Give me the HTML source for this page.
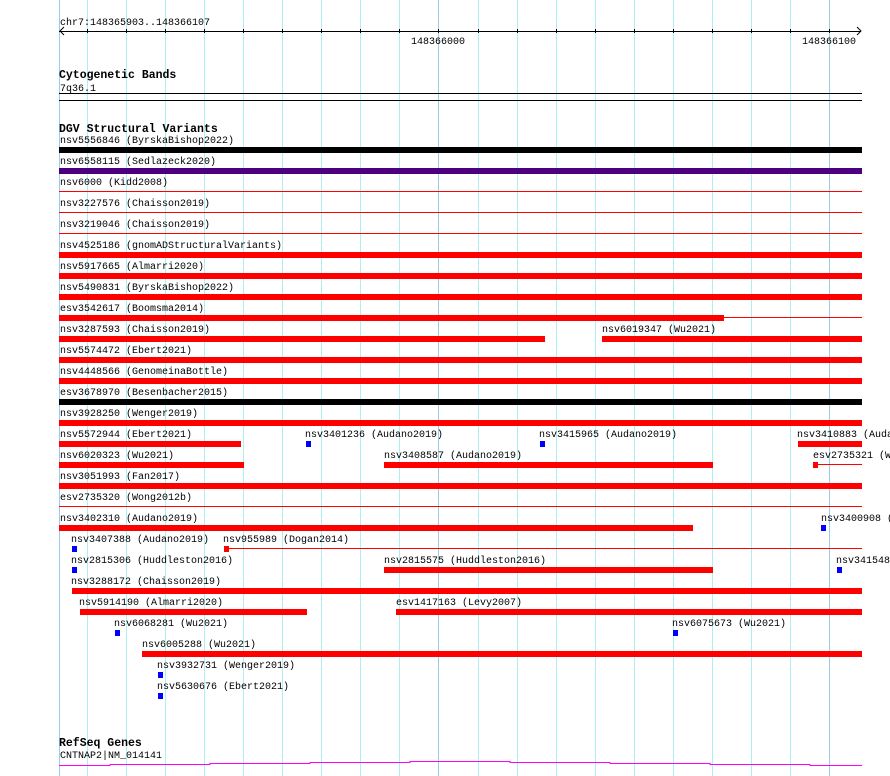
<!DOCTYPE html>
<html><head><meta charset="utf-8"><style>
html,body{overflow:hidden}
body{margin:0;width:890px;height:776px;background:#fff;position:relative;font-family:"Liberation Mono",monospace}
.g{position:absolute;top:0;height:776px;width:1px;background:#aef0f0}
.gd{background:#98cce8}
.t{position:absolute;font-size:10px;line-height:10px;white-space:nowrap;color:#000;transform:translateY(3px)}
.b{position:absolute;font-size:11.5px;font-weight:bold;line-height:12px;white-space:nowrap;transform:translateY(2px)}
.r{position:absolute;height:6px;background:#f00}
.l{position:absolute;height:1px;background:#f00}
.s{position:absolute;width:5px;height:6px;background:#00f}
.k{position:absolute;height:1px;background:#000}
</style></head><body>
<div class="g gd" style="left:59px"></div>
<div class="g" style="left:87px"></div><div class="g" style="left:126px"></div><div class="g" style="left:165px"></div><div class="g" style="left:204px"></div><div class="g" style="left:243px"></div><div class="g" style="left:282px"></div><div class="g" style="left:321px"></div><div class="g" style="left:360px"></div><div class="g" style="left:399px"></div>
<div class="g gd" style="left:438px"></div>
<div class="g" style="left:478px"></div><div class="g" style="left:517px"></div><div class="g" style="left:556px"></div><div class="g" style="left:595px"></div><div class="g" style="left:634px"></div><div class="g" style="left:673px"></div><div class="g" style="left:712px"></div><div class="g" style="left:751px"></div><div class="g" style="left:790px"></div>
<div class="g gd" style="left:829px"></div>

<div class="t" style="left:60px;top:16px">chr7:148365903..148366107</div>
<div class="k" style="left:59px;top:31px;width:802px"></div>
<svg style="position:absolute;left:0;top:0" width="890" height="50">
<path d="M64 27 L60 31 L64 35 M857 27 L861 31 L857 35" stroke="#000" fill="none"/>
<g stroke="#000"><path d="M87.5 29v4M126.5 29v4M165.5 29v4M204.5 29v4M243.5 29v4M282.5 29v4M321.5 29v4M360.5 29v4M399.5 29v4M438.5 29v4M478.5 29v4M517.5 29v4M556.5 29v4M595.5 29v4M634.5 29v4M673.5 29v4M712.5 29v4M751.5 29v4M790.5 29v4M829.5 29v4"/></g>
</svg>
<div class="t" style="left:411px;top:35px">148366000</div>
<div class="t" style="left:802px;top:35px">148366100</div>

<div class="b" style="left:59px;top:68px">Cytogenetic Bands</div>
<div class="t" style="left:60px;top:82px">7q36.1</div>
<div class="k" style="left:59px;top:93px;width:803px"></div>
<div class="k" style="left:59px;top:100px;width:803px"></div>

<div class="b" style="left:59px;top:122px">DGV Structural Variants</div>

<div class="t" style="left:60px;top:134px">nsv5556846 (ByrskaBishop2022)</div><div class="r" style="left:59px;top:147px;width:803px;background:#000"></div>
<div class="t" style="left:60px;top:155px">nsv6558115 (Sedlazeck2020)</div><div class="r" style="left:59px;top:168px;width:803px;background:#4b0082"></div>
<div class="t" style="left:60px;top:176px">nsv6000 (Kidd2008)</div><div class="l" style="left:59px;top:191px;width:803px"></div>
<div class="t" style="left:60px;top:197px">nsv3227576 (Chaisson2019)</div><div class="l" style="left:59px;top:212px;width:803px"></div>
<div class="t" style="left:60px;top:218px">nsv3219046 (Chaisson2019)</div><div class="l" style="left:59px;top:233px;width:803px"></div>
<div class="t" style="left:60px;top:239px">nsv4525186 (gnomADStructuralVariants)</div><div class="r" style="left:59px;top:252px;width:803px"></div>
<div class="t" style="left:60px;top:260px">nsv5917665 (Almarri2020)</div><div class="r" style="left:59px;top:273px;width:803px"></div>
<div class="t" style="left:60px;top:281px">nsv5490831 (ByrskaBishop2022)</div><div class="r" style="left:59px;top:294px;width:803px"></div>
<div class="t" style="left:60px;top:302px">esv3542617 (Boomsma2014)</div><div class="r" style="left:59px;top:315px;width:665px"></div><div class="l" style="left:724px;top:317px;width:138px"></div>
<div class="t" style="left:60px;top:323px">nsv3287593 (Chaisson2019)</div><div class="r" style="left:59px;top:336px;width:486px"></div>
<div class="t" style="left:602px;top:323px">nsv6019347 (Wu2021)</div><div class="r" style="left:602px;top:336px;width:260px"></div>
<div class="t" style="left:60px;top:344px">nsv5574472 (Ebert2021)</div><div class="r" style="left:59px;top:357px;width:803px"></div>
<div class="t" style="left:60px;top:365px">nsv4448566 (GenomeinaBottle)</div><div class="r" style="left:59px;top:378px;width:803px"></div>
<div class="t" style="left:60px;top:386px">esv3678970 (Besenbacher2015)</div><div class="r" style="left:59px;top:399px;width:803px;background:#000"></div>
<div class="t" style="left:60px;top:407px">nsv3928250 (Wenger2019)</div><div class="r" style="left:59px;top:420px;width:803px"></div>

<div class="t" style="left:60px;top:428px">nsv5572944 (Ebert2021)</div><div class="r" style="left:59px;top:441px;width:182px"></div>
<div class="t" style="left:305px;top:428px">nsv3401236 (Audano2019)</div><div class="s" style="left:306px;top:441px"></div>
<div class="t" style="left:539px;top:428px">nsv3415965 (Audano2019)</div><div class="s" style="left:540px;top:441px"></div>
<div class="t" style="left:797px;top:428px">nsv3410883 (Auda</div><div class="r" style="left:798px;top:441px;width:64px"></div>

<div class="t" style="left:60px;top:449px">nsv6020323 (Wu2021)</div><div class="r" style="left:59px;top:462px;width:185px"></div>
<div class="t" style="left:384px;top:449px">nsv3408587 (Audano2019)</div><div class="r" style="left:384px;top:462px;width:329px"></div>
<div class="t" style="left:813px;top:449px">esv2735321 (W</div><div class="r" style="left:813px;top:462px;width:5px"></div><div class="l" style="left:818px;top:464px;width:44px"></div>

<div class="t" style="left:60px;top:470px">nsv3051993 (Fan2017)</div><div class="r" style="left:59px;top:483px;width:803px"></div>
<div class="t" style="left:60px;top:491px">esv2735320 (Wong2012b)</div><div class="l" style="left:59px;top:506px;width:803px"></div>
<div class="t" style="left:60px;top:512px">nsv3402310 (Audano2019)</div><div class="r" style="left:59px;top:525px;width:634px"></div>
<div class="t" style="left:821px;top:512px">nsv3400908 (</div><div class="s" style="left:821px;top:525px"></div>

<div class="t" style="left:71px;top:533px">nsv3407388 (Audano2019)</div><div class="s" style="left:72px;top:546px"></div>
<div class="t" style="left:223px;top:533px">nsv955989 (Dogan2014)</div><div class="r" style="left:224px;top:546px;width:5px"></div><div class="l" style="left:229px;top:548px;width:633px"></div>

<div class="t" style="left:71px;top:554px">nsv2815306 (Huddleston2016)</div><div class="s" style="left:72px;top:567px"></div>
<div class="t" style="left:384px;top:554px">nsv2815575 (Huddleston2016)</div><div class="r" style="left:384px;top:567px;width:329px"></div>
<div class="t" style="left:836px;top:554px">nsv341548</div><div class="s" style="left:837px;top:567px"></div>

<div class="t" style="left:71px;top:575px">nsv3288172 (Chaisson2019)</div><div class="r" style="left:72px;top:588px;width:790px"></div>
<div class="t" style="left:79px;top:596px">nsv5914190 (Almarri2020)</div><div class="r" style="left:80px;top:609px;width:227px"></div>
<div class="t" style="left:396px;top:596px">esv1417163 (Levy2007)</div><div class="r" style="left:396px;top:609px;width:466px"></div>
<div class="t" style="left:114px;top:617px">nsv6068281 (Wu2021)</div><div class="s" style="left:115px;top:630px"></div>
<div class="t" style="left:672px;top:617px">nsv6075673 (Wu2021)</div><div class="s" style="left:673px;top:630px"></div>
<div class="t" style="left:142px;top:638px">nsv6005288 (Wu2021)</div><div class="r" style="left:142px;top:651px;width:720px"></div>
<div class="t" style="left:157px;top:659px">nsv3932731 (Wenger2019)</div><div class="s" style="left:158px;top:672px"></div>
<div class="t" style="left:157px;top:680px">nsv5630676 (Ebert2021)</div><div class="s" style="left:158px;top:693px"></div>

<div class="b" style="left:59px;top:736px">RefSeq Genes</div>
<div class="t" style="left:60px;top:749px">CNTNAP2|NM_014141</div>
<svg style="position:absolute;left:0;top:755px" width="890" height="21">
<path d="M59 10.5H110V9.5H210V8.5H310V7.5H410V6.5H510V7.5H610V8.5H710V9.5H810V10.5H862" stroke="#f0f" fill="none"/>
</svg>
</body></html>
